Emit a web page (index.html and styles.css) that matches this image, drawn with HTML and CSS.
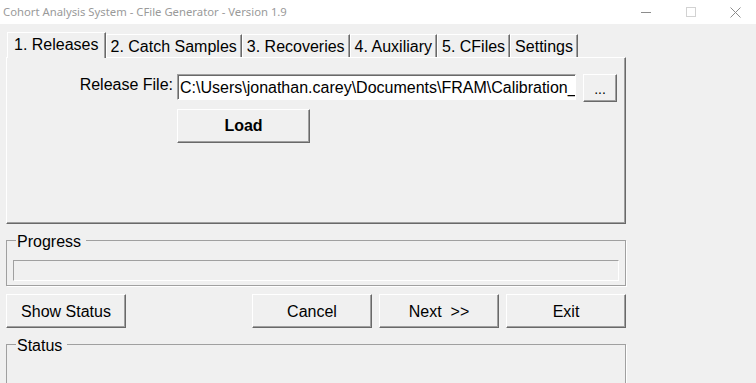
FILE: index.html
```html
<!DOCTYPE html>
<html lang="en">
<head>
  <meta charset="UTF-8" />
  <title>Cohort Analysis System - CFile Generator - Version 1.9</title>
  <link rel="stylesheet" href="styles.css">
</head>
<body>

<div class="titlebar">
  <span class="title">Cohort Analysis System - CFile Generator - Version 1.9</span>
  <div class="controls">
    <span class="ctl">
      <svg width="10" height="10" viewBox="0 0 10 10"><path d="M0 5.5h10" stroke="#8c8c8c" stroke-width="1"/></svg>
    </span>
    <span class="ctl">
      <svg width="10" height="10" viewBox="0 0 10 10"><rect x="0.5" y="0.5" width="9" height="9" fill="none" stroke="#d2d2d2" stroke-width="1"/></svg>
    </span>
    <span class="ctl">
      <svg width="11" height="11" viewBox="0 0 11 11"><path d="M0.5 0.5l10 10M10.5 0.5l-10 10" stroke="#8c8c8c" stroke-width="1"/></svg>
    </span>
  </div>
</div>

<div class="window">
  <div class="tabs">
    <div class="tab active">1. Releases</div>
    <div class="tab">2. Catch Samples</div>
    <div class="tab">3. Recoveries</div>
    <div class="tab">4. Auxiliary</div>
    <div class="tab">5. CFiles</div>
    <div class="tab">Settings</div>
  </div>

  <div class="panel">
    <div class="file-row">
      <label class="file-label">Release File:</label>
      <div class="textbox">C:\Users\jonathan.carey\Documents\FRAM\Calibration_T</div>
      <button class="btn browse">...</button>
    </div>
    <div class="load-row">
      <button class="btn load">Load</button>
    </div>
  </div>

  <fieldset class="group progress-group">
    <legend>Progress</legend>
    <div class="progress-bar"></div>
  </fieldset>

  <div class="actions">
    <button class="btn action">Show Status</button>
    <div class="right-actions">
      <button class="btn action">Cancel</button>
      <button class="btn action">Next&nbsp; &gt;&gt;</button>
      <button class="btn action">Exit</button>
    </div>
  </div>

  <fieldset class="group status-group">
    <legend>Status</legend>
  </fieldset>
</div>

</body>
</html>
```

FILE: styles.css
```css
* { box-sizing: border-box; margin: 0; padding: 0; }

html, body {
  width: 756px;
  height: 383px;
  overflow: hidden;
  background-color: #f0f0f0;
  font-family: 'Liberation Sans', Arial, sans-serif;
  font-size: 16px;
  color: #000;
}

/* title bar */
.titlebar {
  height: 24px;
  background: #fff;
  display: flex;
  align-items: center;
  justify-content: space-between;
}

.title {
  font-family: 'Noto Sans', sans-serif;
  font-size: 11.3px;
  color: #9a9a9a;
  padding-left: 3px;
  padding-bottom: 1px;
}

.controls {
  display: flex;
  margin-right: -2px;
}

.ctl {
  width: 45px;
  height: 24px;
  display: flex;
  align-items: center;
  justify-content: center;
}

.ctl svg { display: block; }

/* main window */
.window {
  padding: 0 6px;
  width: 632px;
}

.tabs {
  display: flex;
  align-items: flex-end;
  margin-top: 8px;
  padding-left: 1px;
}

.tab {
  height: 23px;
  line-height: 20px;
  padding: 2px 4px 0;
  border-top: 1px solid #fff;
  border-left: 1px solid #fff;
  border-right: 1px solid #696969;
  box-shadow: inset -1px 0 0 #a0a0a0;
  white-space: nowrap;
}

.tab.active {
  height: 26px;
  padding: 2px 6px 0;
  margin-bottom: -1px;
  position: relative;
  z-index: 1;
  background: #f0f0f0;
}

.panel {
  width: 620px;
  height: 167px;
  border: 1px solid;
  border-color: #fff #696969 #696969 #fff;
  box-shadow: inset -1px -1px 0 #a0a0a0;
  padding-top: 16px;
}

.file-row {
  display: flex;
  align-items: flex-start;
}

.file-label {
  width: 166px;
  text-align: right;
  line-height: 20px;
  padding-top: 1px;
}

.textbox {
  width: 399px;
  height: 26px;
  margin-left: 4px;
  background: #fff;
  border: 1px solid;
  border-color: #a0a0a0 #fff #fff #a0a0a0;
  box-shadow: inset 1px 1px 0 #696969;
  padding: 3px 0 0 2px;
  line-height: 19px;
  white-space: nowrap;
  overflow: hidden;
}

.btn {
  font-family: 'Liberation Sans', Arial, sans-serif;
  font-size: 16px;
  color: #000;
  background: #f0f0f0;
  border: 1px solid;
  border-color: #fff #696969 #696969 #fff;
  box-shadow: inset -1px -1px 0 #a0a0a0;
  display: flex;
  align-items: center;
  justify-content: center;
}

.browse {
  width: 34px;
  height: 28px;
  margin-left: 7px;
  font-size: 14px;
  padding-top: 2px;
}

.load-row {
  padding-left: 170px;
  margin-top: 7px;
}

.load {
  width: 133px;
  height: 34px;
  font-weight: bold;
}

/* group boxes */
.group {
  width: 620px;
  border: 1px solid #a0a0a0;
  box-shadow: 1px 1px 0 #fff;
  padding: 10px 6px 4px;
  margin-top: 6px;
}

.group legend {
  margin-left: 3px;
  padding: 4px 5px 0 1px;
  line-height: 16px;
}

.progress-bar {
  height: 21px;
  border: 1px solid;
  border-color: #a0a0a0 #fff #fff #a0a0a0;
}

.actions {
  display: flex;
  justify-content: space-between;
  margin-top: 8px;
  width: 620px;
}

.right-actions {
  display: flex;
  gap: 7px;
}

.action {
  width: 120px;
  height: 34px;
  padding-top: 2px;
}

.status-group {
  height: 80px;
  margin-top: 6px;
}
```
